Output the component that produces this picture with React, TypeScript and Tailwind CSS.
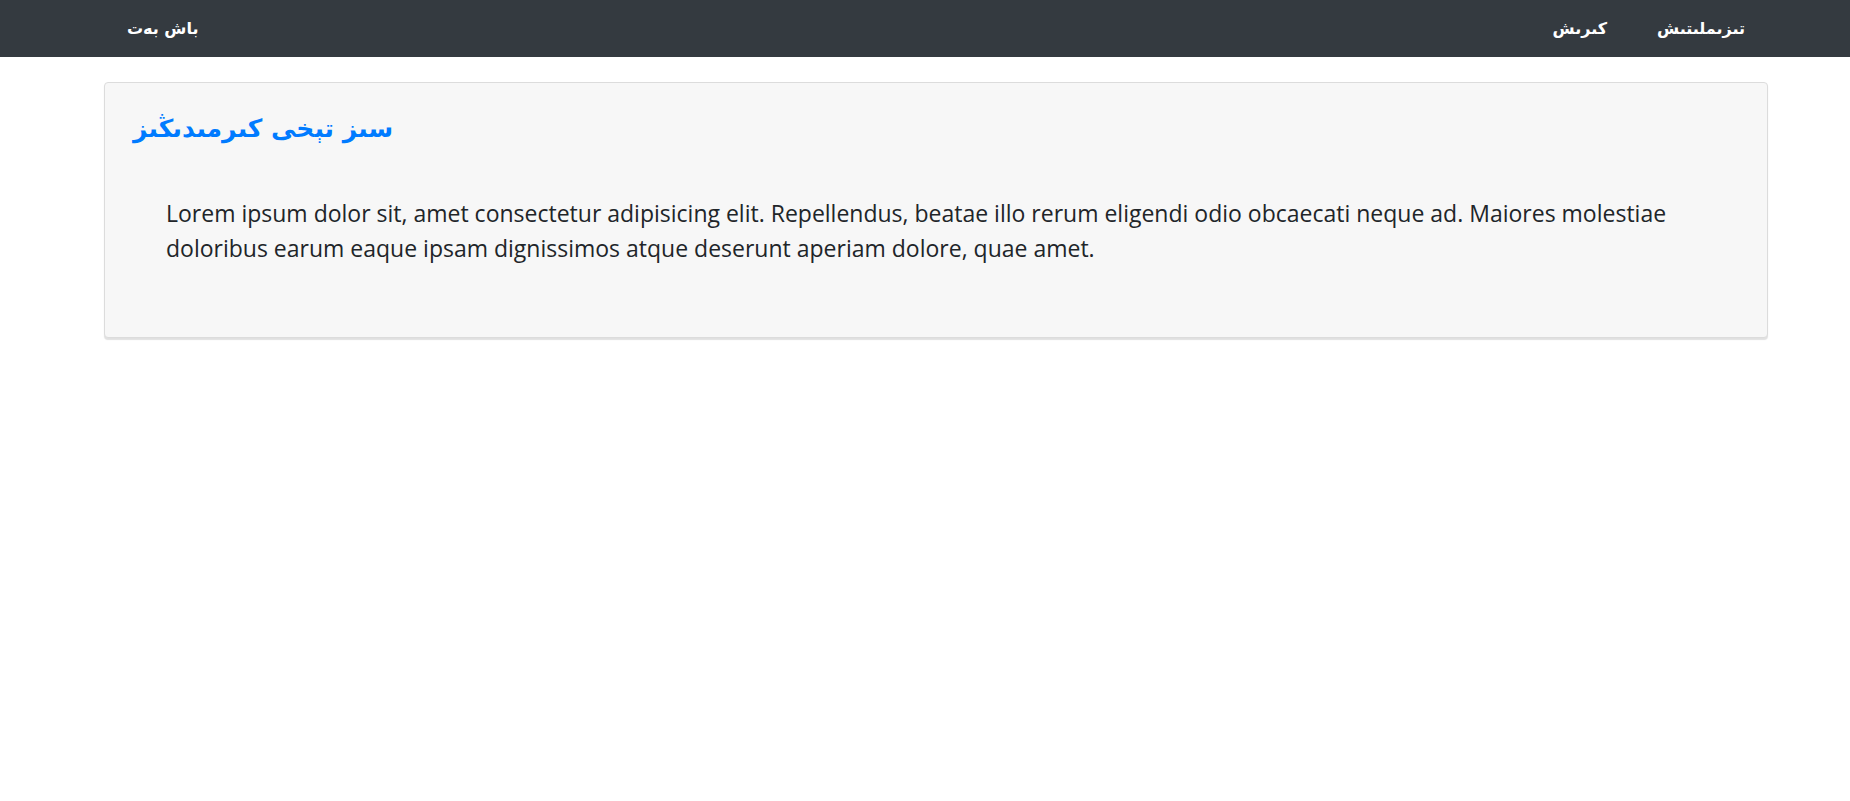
export default function App() {
  const arabic = { fontFamily: '"DejaVu Sans", sans-serif' };
  return (
    <div className="min-h-screen bg-white font-['Open_Sans','DejaVu_Sans',sans-serif] text-[#212529]">
      {/* navbar */}
      <nav className="h-[57px] bg-[#343a40] flex items-center justify-between pl-[127px] pr-[105px]">
        <a className="text-white text-[16px] font-semibold" style={arabic} dir="rtl">
          باش بەت
        </a>
        <div className="flex items-center gap-[50px]">
          <a className="text-white text-[16px] font-semibold" style={arabic} dir="rtl">
            كىرىش
          </a>
          <a className="text-white text-[16px] font-semibold" style={arabic} dir="rtl">
            تىزىملىتىش
          </a>
        </div>
      </nav>

      {/* card */}
      <div className="mt-[25px] ml-[104px] mr-[82px] h-[256px] bg-[#f7f7f7] border border-[#dcdcdc] rounded-[4px] shadow-[0_2px_1px_rgba(0,0,0,0.12)] px-[28px] pt-[31px]">
        <h2 className="text-[#007bff] text-[25px] font-semibold leading-[1.2]" style={arabic}>
          سىز تېخى كىرمىدىڭىز
        </h2>
        <p className="mt-[52px] ml-[33px] mr-[40px] text-[23px] leading-[35px]">
          Lorem ipsum dolor sit, amet consectetur adipisicing elit. Repellendus, beatae illo rerum eligendi odio
          obcaecati neque ad. Maiores molestiae doloribus earum eaque ipsam dignissimos atque deserunt aperiam
          dolore, quae amet.
        </p>
      </div>
    </div>
  );
}
